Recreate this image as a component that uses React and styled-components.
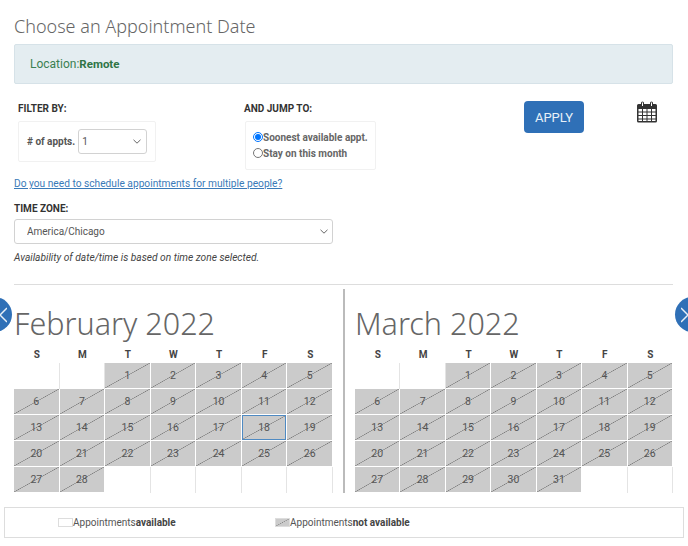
import React from "react";
import styled, { createGlobalStyle } from "styled-components";

const GlobalStyle = createGlobalStyle`
  html, body {
    margin: 0;
    padding: 0;
    background: #fff;
    overflow: hidden;
  }
  * {
    box-sizing: border-box;
  }
`;

const DAYS = ["S", "M", "T", "W", "T", "F", "S"];

const MONTHS = [
  { name: "February 2022", total: 28, selected: 18 },
  { name: "March 2022", total: 31 },
];

const CHEVRON =
  "url(\"data:image/svg+xml,%3Csvg xmlns='http://www.w3.org/2000/svg' width='8' height='5' viewBox='0 0 8 5'%3E%3Cpath d='M.5.8 4 4.200 7.500.8' fill='none' stroke='%23666' stroke-width='1'/%3E%3C/svg%3E\")";

function monthCells(total) {
  const cells = [null, null];
  for (let day = 1; day <= total; day++) cells.push(day);
  while (cells.length < 35) cells.push(null);
  return cells;
}

function CalendarIcon() {
  return (
    <svg width="20" height="22" viewBox="0 0 20 22" aria-hidden="true">
      <path
        fill="#333"
        fillRule="evenodd"
        d="M1.5 3H4V2a1.5 1.5 0 0 1 3 0v1h6V2a1.5 1.5 0 0 1 3 0v1h2.500A1.500 1.500 0 0 1 20 4.500V20a1.500 1.500 0 0 1-1.500 1.500h-17A1.500 1.500 0 0 1 0 20V4.500A1.500 1.500 0 0 1 1.500 3ZM5 1.500V5h1V1.500ZM14 1.500V5h1V1.500ZM1.500 8v2.500h3.500V8ZM6 8v2.500h3.500V8ZM10.500 8v2.500H14V8ZM15 8v2.500h3.500V8ZM1.500 11.500V14h3.500v-2.500ZM6 11.500V14h3.500v-2.500ZM10.500 11.500V14H14v-2.500ZM15 11.500V14h3.500v-2.500ZM1.500 15v2.500h3.500V15ZM6 15v2.500h3.500V15ZM10.500 15v2.500H14V15ZM15 15v2.500h3.500V15ZM1.500 18.500V20h3.500v-1.500ZM6 18.500V20h3.500v-1.500ZM10.500 18.500V20H14v-1.500ZM15 18.500V20h3.500v-1.500Z"
      />
    </svg>
  );
}

function NavIcon({ dir }) {
  const d = dir === "left" ? "M8 1 L1 8 L8 15" : "M0 1 L7 8 L0 15";
  return (
    <svg width="8" height="16" viewBox="0 0 8 16" aria-hidden="true">
      <path d={d} fill="none" stroke="#e8f0f8" strokeWidth="1.500" />
    </svg>
  );
}

export default function App() {
  return (
    <Page>
      <GlobalStyle />
      <Title>Choose an Appointment Date</Title>
      <Alert>
        Location:<strong>Remote</strong>
      </Alert>

      <FilterRow>
        <FilterColumn $width="226px">
          <FilterLabel>FILTER BY:</FilterLabel>
          <FilterBox>
            <BoldText># of appts.</BoldText>
            <SmallSelect defaultValue="1">
              <option>1</option>
              <option>2</option>
            </SmallSelect>
          </FilterBox>
        </FilterColumn>
        <FilterColumn $width="280px">
          <FilterLabel>AND JUMP TO:</FilterLabel>
          <RadioBox>
            <RadioRow>
              <input type="radio" name="jump" defaultChecked />
              Soonest available appt.
            </RadioRow>
            <RadioRow>
              <input type="radio" name="jump" />
              Stay on this month
            </RadioRow>
          </RadioBox>
        </FilterColumn>
        <ApplyButton>APPLY</ApplyButton>
        <IconSlot>
          <CalendarIcon />
        </IconSlot>
      </FilterRow>

      <MultiLink href="#">Do you need to schedule appointments for multiple people?</MultiLink>

      <ZoneLabel>TIME ZONE:</ZoneLabel>
      <ZoneSelect defaultValue="America/Chicago">
        <option>America/Chicago</option>
      </ZoneSelect>
      <Note>Availability of date/time is based on time zone selected.</Note>
      <Rule />

      <Calendars>
        {MONTHS.map((month, i) => (
          <Month key={month.name} $divided={i === 1}>
            <MonthName>{month.name}</MonthName>
            <DayGrid>
              {DAYS.map((day, j) => (
                <DayHead key={j}>{day}</DayHead>
              ))}
              {monthCells(month.total).map((day, j) =>
                day ? (
                  <DayCell key={j} $selected={day === month.selected}>
                    {day}
                  </DayCell>
                ) : (
                  <EmptyCell key={j} />
                )
              )}
            </DayGrid>
          </Month>
        ))}
        <NavButton $side="left" aria-label="Previous month">
          <NavIcon dir="left" />
        </NavButton>
        <NavButton $side="right" aria-label="Next month">
          <NavIcon dir="right" />
        </NavButton>
      </Calendars>

      <Legend>
        <LegendItem $width="217px">
          <Swatch />
          Appointments<strong>available</strong>
        </LegendItem>
        <LegendItem>
          <Swatch $off />
          Appointments<strong>not available</strong>
        </LegendItem>
      </Legend>
    </Page>
  );
}

const Page = styled.div`
  width: 688px;
  height: 546px;
  padding: 14px 15px 0 14px;
  font-family: Roboto, "Liberation Sans", sans-serif;
  color: #444;
  overflow: hidden;
`;

const Title = styled.h1`
  margin: 0;
  height: 30px;
  font-family: "Noto Sans", "Open Sans", sans-serif;
  font-weight: 300;
  font-size: 18px;
  line-height: 25px;
  color: #666;
`;

const Alert = styled.div`
  height: 40px;
  padding-left: 15px;
  display: flex;
  align-items: center;
  background: #e4edf1;
  border: 1px solid #d6e2e8;
  border-radius: 2px;
  font-size: 12px;
  color: #3b8052;

  strong {
    font-size: 11.500px;
    font-weight: 700;
    color: #2f7445;
  }
`;

const FilterRow = styled.div`
  display: flex;
  align-items: flex-start;
  height: 76px;
  margin-top: 17px;
  padding-left: 4px;
`;

const FilterColumn = styled.div`
  width: ${(p) => p.$width};
  flex: none;
`;

const FilterLabel = styled.div`
  height: 14px;
  font-size: 10px;
  line-height: 16px;
  font-weight: 700;
  color: #333;
`;

const FilterBox = styled.div`
  width: 138px;
  height: 41px;
  margin-top: 6px;
  padding-left: 8px;
  display: flex;
  align-items: center;
  gap: 3px;
  border: 1px solid #f1f1f1;
  border-radius: 2px;
`;

const BoldText = styled.span`
  font-size: 10px;
  font-weight: 700;
  color: #555;
`;

const SmallSelect = styled.select`
  appearance: none;
  width: 69px;
  height: 25px;
  padding-left: 3px;
  background: #fff ${CHEVRON} no-repeat right 5px center;
  border: 1px solid #d2d2d2;
  border-radius: 3px;
  font-family: inherit;
  font-size: 10px;
  color: #555;
`;

const RadioBox = styled.div`
  width: 131px;
  height: 49px;
  margin: 6px 0 0 1px;
  padding: 7px 0 0 7px;
  border: 1px solid #f1f1f1;
  border-radius: 2px;
`;

const RadioRow = styled.label`
  display: flex;
  align-items: center;
  height: 16px;
  font-size: 10px;
  font-weight: 700;
  color: #666;
  white-space: nowrap;

  input {
    width: 10px;
    height: 10px;
    margin: 0;
  }
`;

const ApplyButton = styled.button`
  width: 60px;
  height: 32px;
  padding: 0;
  flex: none;
  background: #2f70b7;
  border: none;
  border-radius: 4px;
  font-family: inherit;
  font-size: 13px;
  color: #e8f0f8;
`;

const IconSlot = styled.div`
  margin-left: 53px;
  line-height: 0;
`;

const MultiLink = styled.a`
  display: block;
  height: 14px;
  font-size: 10.200px;
  line-height: 14px;
  color: #3a7ab8;
  text-decoration: underline;
`;

const ZoneLabel = styled.div`
  margin-top: 11px;
  height: 14px;
  font-size: 10px;
  line-height: 14px;
  font-weight: 700;
  color: #333;
`;

const ZoneSelect = styled.select`
  appearance: none;
  display: block;
  width: 319px;
  height: 25px;
  margin-top: 3px;
  padding-left: 12px;
  background: #fff ${CHEVRON} no-repeat right 4px center;
  border: 1px solid #d2d2d2;
  border-radius: 3px;
  font-family: inherit;
  font-size: 10px;
  color: #555;
`;

const Note = styled.p`
  margin: 7px 0 0;
  height: 14px;
  font-size: 10.200px;
  line-height: 14px;
  font-style: italic;
  color: #444;
`;

const Rule = styled.div`
  height: 1px;
  margin-top: 19px;
  background: #ddd;
`;

const Calendars = styled.div`
  position: relative;
  display: flex;
  gap: 22px;
  margin-top: 4px;
  height: 204px;
`;

const Month = styled.section`
  position: relative;
  width: ${(p) => (p.$divided ? "318px" : "319px")};

  &::before {
    content: "";
    display: ${(p) => (p.$divided ? "block" : "none")};
    position: absolute;
    left: -12px;
    top: 0;
    bottom: 0;
    width: 2px;
    background: #bbb;
  }
`;

const MonthName = styled.h2`
  margin: 0;
  height: 57px;
  font-family: "Noto Sans", "Open Sans", sans-serif;
  font-weight: 300;
  font-size: 30.500px;
  line-height: 68px;
  color: #666;
  white-space: nowrap;
`;

const DayGrid = styled.div`
  display: grid;
  grid-template-columns: repeat(7, 1fr);
  grid-template-rows: 17px repeat(5, 26px);
`;

const DayHead = styled.div`
  font-size: 10px;
  font-weight: 700;
  line-height: 18px;
  text-align: center;
  color: #444;
`;

const DayCell = styled.div`
  display: flex;
  align-items: center;
  justify-content: center;
  margin: 0 1px 1px 0;
  font-size: 10.500px;
  color: #555;
  background-color: #cbcbcb;
  background-image: linear-gradient(
    to bottom right,
    transparent calc(50% - 0.6px),
    #7d7d7d 50%,
    transparent calc(50% + 0.6px)
  );
  border: ${(p) => (p.$selected ? "1px solid #4f8ac2" : "none")};
`;

const EmptyCell = styled.div`
  border-right: 1px solid #e4e4e4;
`;

const NavButton = styled.button`
  position: absolute;
  top: 8px;
  ${(p) => (p.$side === "left" ? "left: -37px;" : "right: -37px;")}
  width: 35px;
  height: 35px;
  display: flex;
  align-items: center;
  justify-content: ${(p) => (p.$side === "left" ? "flex-end" : "flex-start")};
  padding: ${(p) => (p.$side === "left" ? "0 5px 0 0" : "0 0 0 6px")};
  background: #2f70b7;
  border: none;
  border-radius: 50%;
`;

const Legend = styled.div`
  display: flex;
  align-items: center;
  height: 31px;
  margin: 14px -11px 0 -10px;
  padding-left: 53px;
  border: 1px solid #ddd;
  font-size: 10px;
  color: #555;

  strong {
    font-weight: 700;
    color: #444;
  }
`;

const LegendItem = styled.div`
  display: flex;
  align-items: center;
  width: ${(p) => p.$width || "auto"};
  flex: none;
`;

const Swatch = styled.span`
  width: 15px;
  height: 9px;
  border: 1px solid #ddd;
  background-color: ${(p) => (p.$off ? "#cbcbcb" : "#fff")};
  background-image: ${(p) =>
    p.$off
      ? "linear-gradient(to bottom right, transparent calc(50% - 0.5px), #888 50%, transparent calc(50% + 0.5px))"
      : "none"};
`;
